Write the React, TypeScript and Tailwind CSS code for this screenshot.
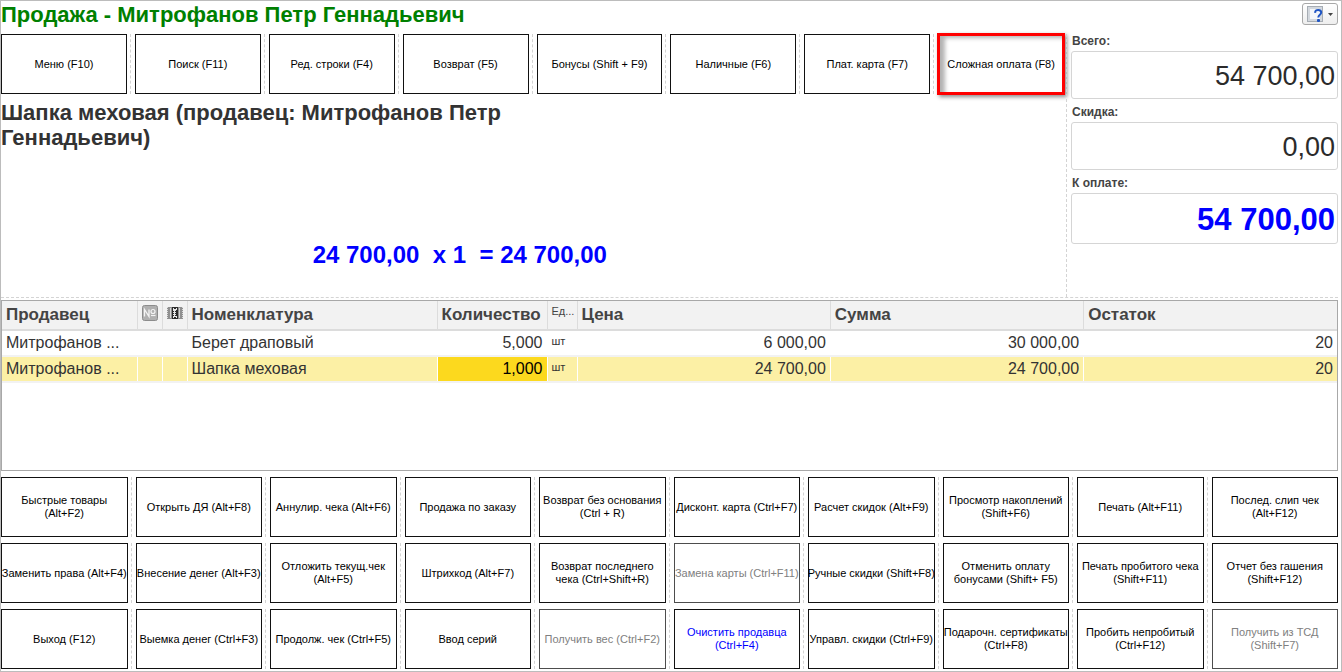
import React, { useState } from 'react';
import clsx from 'clsx';

interface Command {
  label: string;
  tone?: 'link' | 'marked';
  disabled?: boolean;
}

interface SaleRow {
  seller: string;
  item: string;
  qty: string;
  unit: string;
  price: string;
  sum: string;
  rest: string;
}

const TOP_COMMANDS: Command[] = [
  { label: 'Меню (F10)' },
  { label: 'Поиск (F11)' },
  { label: 'Ред. строки (F4)' },
  { label: 'Возврат (F5)' },
  { label: 'Бонусы (Shift + F9)' },
  { label: 'Наличные (F6)' },
  { label: 'Плат. карта (F7)' },
  { label: 'Сложная оплата (F8)', tone: 'marked' },
];

const BOTTOM_COMMANDS: Command[][] = [
  [
    { label: 'Быстрые товары\n(Alt+F2)' },
    { label: 'Открыть ДЯ (Alt+F8)' },
    { label: 'Аннулир. чека (Alt+F6)' },
    { label: 'Продажа по заказу' },
    { label: 'Возврат без основания\n(Ctrl + R)' },
    { label: 'Дисконт. карта (Ctrl+F7)' },
    { label: 'Расчет скидок (Alt+F9)' },
    { label: 'Просмотр накоплений\n(Shift+F6)' },
    { label: 'Печать (Alt+F11)' },
    { label: 'Послед. слип чек\n(Alt+F12)' },
  ],
  [
    { label: 'Заменить права (Alt+F4)' },
    { label: 'Внесение денег (Alt+F3)' },
    { label: 'Отложить текущ.чек\n(Alt+F5)' },
    { label: 'Штрихкод (Alt+F7)' },
    { label: 'Возврат последнего\nчека (Ctrl+Shift+R)' },
    { label: 'Замена карты (Ctrl+F11)', disabled: true },
    { label: 'Ручные скидки (Shift+F8)' },
    { label: 'Отменить оплату\nбонусами (Shift+ F5)' },
    { label: 'Печать пробитого чека\n(Shift+F11)' },
    { label: 'Отчет без гашения\n(Shift+F12)' },
  ],
  [
    { label: 'Выход (F12)' },
    { label: 'Выемка денег (Ctrl+F3)' },
    { label: 'Продолж. чек (Ctrl+F5)' },
    { label: 'Ввод серий' },
    { label: 'Получить вес (Ctrl+F2)', disabled: true },
    { label: 'Очистить продавца\n(Ctrl+F4)', tone: 'link' },
    { label: 'Управл. скидки (Ctrl+F9)' },
    { label: 'Подарочн. сертификаты\n(Ctrl+F8)' },
    { label: 'Пробить непробитый\n(Ctrl+F12)' },
    { label: 'Получить из ТСД\n(Shift+F7)', disabled: true },
  ],
];

const ROWS: SaleRow[] = [
  { seller: 'Митрофанов ...', item: 'Берет драповый', qty: '5,000', unit: 'шт', price: '6 000,00', sum: '30 000,00', rest: '20' },
  { seller: 'Митрофанов ...', item: 'Шапка меховая', qty: '1,000', unit: 'шт', price: '24 700,00', sum: '24 700,00', rest: '20' },
];

const CommandButton: React.FC<{ command: Command }> = ({ command }) => (
  <button
    type="button"
    disabled={command.disabled}
    className={clsx(
      'flex h-[60px] min-w-0 flex-1 basis-0 items-center justify-center border bg-white text-center text-[11px] leading-[13px] whitespace-pre',
      command.tone === 'marked'
        ? 'border-[#ff0000] outline-[3px] -outline-offset-2 outline-[#ff0000] shadow-[2px_2px_4px_1px_rgba(0,0,0,0.45),inset_6px_3px_4px_rgba(0,0,0,0.3)]'
        : command.disabled ? 'border-[#4d4d4d]' : 'border-[#111111]',
      command.disabled ? 'text-[#808080]' : command.tone === 'link' ? 'text-[#0000ff]' : 'text-black',
    )}
  >
    {command.label}
  </button>
);

const CommandRow: React.FC<{ commands: Command[] }> = ({ commands }) => (
  <div className="flex">
    {commands.map((command, i) => (
      <React.Fragment key={command.label}>
        {i > 0 && <div className="mr-1 ml-[3px] border-l border-dashed border-[#d4d4d4]" />}
        <CommandButton command={command} />
      </React.Fragment>
    ))}
  </div>
);

const TotalField: React.FC<{ id: string; label: string; value: string; due?: boolean }> = ({ id, label, value, due }) => (
  <div>
    <label htmlFor={id} className="block h-[17px] pl-px text-xs leading-[15px] font-bold text-[#444444]">
      {label}
    </label>
    <input
      id={id}
      readOnly
      value={value}
      className={clsx(
        'block w-full rounded-[3px] border border-[#d5d5d5] bg-white pt-[2px] pr-[2px] text-right outline-none',
        due ? 'h-[51px] text-[31px] font-bold text-[#0000ff]' : 'h-12 text-[27px] text-[#2b2b2b]',
      )}
    />
  </div>
);

const NumberIcon = () => (
  <svg width="16" height="16" viewBox="0 0 16 16" className="block" aria-label="№">
    <rect x="0.5" y="0.5" width="15" height="15" rx="2" fill="#b0b0b0" stroke="#8c8c8c" />
    <path d="M2.500 11.500V4.500L7 11.500V4.500" fill="none" stroke="#f4f4f4" strokeWidth="1.300" />
    <circle cx="11" cy="6.500" r="2" fill="none" stroke="#f4f4f4" strokeWidth="1.200" />
    <path d="M9 10.500h4.500" stroke="#f4f4f4" strokeWidth="1.200" />
  </svg>
);

const MarkIcon = () => (
  <svg width="16" height="12" viewBox="0 0 16 12" className="block" aria-label="Марка">
    <rect width="16" height="12" fill="#8f8f8f" />
    <path d="M0.500 0v12M15.500 0v12" stroke="#dddddd" strokeDasharray="1 1" />
    <path d="M3.500 1v10M12.500 1v10" stroke="#d8d8d8" />
    <rect x="5" width="6" height="12" fill="#2b2b2b" />
    <path d="M6 1h1v1h2V1h1v2H9v1H8v1h1v1H8v1h1v1H8v1h2v2H9v-1H7v1H6V9h1V8H6V7h1V6H6V5h1V4H6z" fill="#e8e8e8" />
  </svg>
);

const HelpIcon = () => (
  <svg width="16" height="16" viewBox="0 0 16 16" className="block">
    <rect x="0.500" y="0.500" width="15" height="15" fill="#d3d8de" stroke="#a7adb4" />
    <rect x="3" y="3" width="10" height="10" fill="#f4f7fa" />
    <path d="M8.200 6.800C8 4.700 9.500 3.900 11.200 3.900c1.800 0 3 .9 3 2.500 0 2.400-2.900 2.200-2.900 5" fill="none" stroke="#1f55c4" strokeWidth="2" />
    <rect x="10" y="13" width="3" height="3" rx="1" fill="#1f55c4" />
  </svg>
);

const TH = 'h-[29px] border-b-2 border-[#dcdcdc] bg-[#f2f2f2] p-0 pl-1 text-left align-middle';
const TD = 'h-[26px] truncate border-y-2 border-y-[#f2f2f2] p-0 px-1 leading-5';

function SalesTable({ selected, onSelect }: { selected: number; onSelect: (i: number) => void }) {
  return (
    <table className="w-full table-fixed border-collapse text-base text-[#333333]">
      <colgroup>
        <col className="w-[135px]" />
        <col className="w-[25px]" />
        <col className="w-[25px]" />
        <col className="w-[250px]" />
        <col className="w-[110px]" />
        <col className="w-[30px]" />
        <col />
        <col />
        <col />
      </colgroup>
      <thead className="text-[17px] leading-5 text-[#444444]">
        <tr className="divide-x divide-[#cfcfcf]">
          <th className={TH}>Продавец</th>
          <th className={clsx(TH, 'pb-1!')}><NumberIcon /></th>
          <th className={clsx(TH, 'pb-1!')}><MarkIcon /></th>
          <th className={TH}>Номенклатура</th>
          <th className={TH}>Количество</th>
          <th className={clsx(TH, 'pb-2! text-[11px] leading-3 font-normal')}>Ед...</th>
          <th className={TH}>Цена</th>
          <th className={TH}>Сумма</th>
          <th className={TH}>Остаток</th>
        </tr>
      </thead>
      <tbody>
        {ROWS.map((row, i) => {
          const active = i === selected;
          return (
            <tr
              key={row.item}
              onClick={() => onSelect(i)}
              className={clsx('divide-x divide-white', active && 'bg-[#fcf0a5]')}
            >
              <td className={TD}>{row.seller}</td>
              <td className={TD} />
              <td className={TD} />
              <td className={TD}>{row.item}</td>
              <td className={clsx(TD, 'text-right', active && 'bg-[#fcd91e] text-black')}>{row.qty}</td>
              <td className={clsx(TD, 'pb-1! text-[11px] leading-4!')}>{row.unit}</td>
              <td className={clsx(TD, 'text-right')}>{row.price}</td>
              <td className={clsx(TD, 'text-right')}>{row.sum}</td>
              <td className={clsx(TD, 'text-right')}>{row.rest}</td>
            </tr>
          );
        })}
      </tbody>
    </table>
  );
}

export default function App() {
  const [selected, setSelected] = useState(1);

  return (
    <div className="flex min-h-screen flex-col border border-[#bcbcbc] bg-white pr-[3px] pb-[2px] font-['Liberation_Sans',Arial,sans-serif]">
      <header className="flex h-[33px] items-start justify-between">
        <h1 className="text-[22px] leading-7 font-bold text-[#008000]">Продажа - Митрофанов Петр Геннадьевич</h1>
        <button
          type="button"
          aria-label="Справка"
          className="mt-[2px] flex h-[22px] w-9 items-center gap-[5px] rounded-[3px] border border-[#a8a8a8] bg-linear-to-b from-white to-[#eeeeee] pl-1"
        >
          <HelpIcon />
          <svg width="5" height="3" viewBox="0 0 5 3"><path d="M0 0h5L2.500 3z" fill="#444444" /></svg>
        </button>
      </header>

      <section className="flex border-b border-dashed border-[#d4d4d4]">
        <div className="flex min-w-0 flex-1 flex-col">
          <CommandRow commands={TOP_COMMANDS} />
          <h2 className="mt-[6px] w-1/2 text-[22px] leading-[25px] font-bold text-[#333333]">
            Шапка меховая (продавец: Митрофанов Петр Геннадьевич)
          </h2>
          <p className="mt-auto mb-7 w-[57%] text-right text-2xl leading-7 font-bold whitespace-pre text-[#0000ff]">
            {'24 700,00  x 1  = 24 700,00'}
          </p>
        </div>
        <div className="mr-1 ml-[2px] border-l border-dashed border-[#d4d4d4]" />
        <div className="flex w-[267px] flex-col gap-[6px] pb-[53px]">
          <TotalField id="total" label="Всего:" value="54 700,00" />
          <TotalField id="discount" label="Скидка:" value="0,00" />
          <TotalField id="due" label="К оплате:" value="54 700,00" due />
        </div>
      </section>

      <main className="mt-[2px] mb-[6px] min-h-[120px] flex-1 border border-[#a8a8a8]">
        <SalesTable selected={selected} onSelect={setSelected} />
      </main>

      <footer className="flex flex-col gap-[6px]">
        {BOTTOM_COMMANDS.map((commands, i) => (
          <CommandRow key={i} commands={commands} />
        ))}
      </footer>
    </div>
  );
}
